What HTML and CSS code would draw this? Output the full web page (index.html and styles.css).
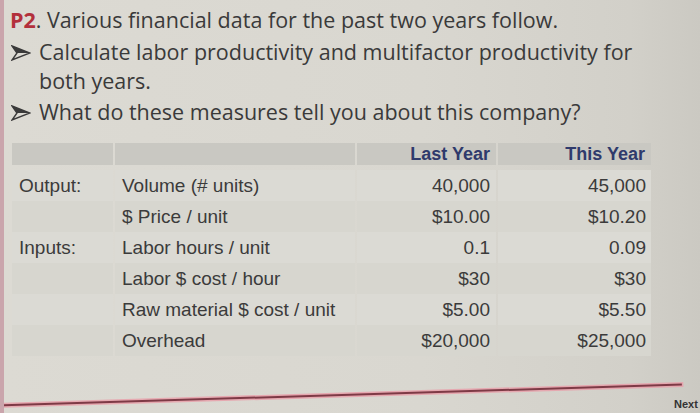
FILE: index.html
```html
<!DOCTYPE html>
<html>
<head>
<meta charset="utf-8">
<link rel="stylesheet" href="styles.css">
</head>
<body>
<div class="page">
  <div class="slide">
    <p class="title"><span class="num">P2</span>. Various financial data for the past two years follow.</p>
    <ul class="bullets">
      <li>
        <svg class="arrow" viewBox="0 0 20 16" width="20" height="16"><polygon points="1,1 19,8 1,15 6,8" fill="none" stroke="#3a3a3a" stroke-width="1.4" stroke-linejoin="miter"/><polygon points="1,1 19,8 6,8" fill="#3a3a3a"/></svg>
        <span>Calculate labor productivity and multifactor productivity for both years.</span>
      </li>
      <li class="second">
        <svg class="arrow" viewBox="0 0 20 16" width="20" height="16"><polygon points="1,1 19,8 1,15 6,8" fill="none" stroke="#3a3a3a" stroke-width="1.4" stroke-linejoin="miter"/><polygon points="1,1 19,8 6,8" fill="#3a3a3a"/></svg>
        <span>What do these measures tell you about this company?</span>
      </li>
    </ul>

    <div class="table">
      <div class="head c1"></div>
      <div class="head c2"></div>
      <div class="head c3">Last Year</div>
      <div class="head c4">This Year</div>

      <div class="cell c1">Output:</div>
      <div class="cell c2">Volume (# units)</div>
      <div class="cell c3">40,000</div>
      <div class="cell c4">45,000</div>

      <div class="cell c1 alt"></div>
      <div class="cell c2 alt">$ Price / unit</div>
      <div class="cell c3 alt">$10.00</div>
      <div class="cell c4 alt">$10.20</div>

      <div class="cell c1">Inputs:</div>
      <div class="cell c2">Labor hours / unit</div>
      <div class="cell c3">0.1</div>
      <div class="cell c4">0.09</div>

      <div class="cell c1 alt"></div>
      <div class="cell c2 alt">Labor $ cost / hour</div>
      <div class="cell c3 alt">$30</div>
      <div class="cell c4 alt">$30</div>

      <div class="cell c1"></div>
      <div class="cell c2">Raw material $ cost / unit</div>
      <div class="cell c3">$5.00</div>
      <div class="cell c4">$5.50</div>

      <div class="cell c1 alt"></div>
      <div class="cell c2 alt">Overhead</div>
      <div class="cell c3 alt">$20,000</div>
      <div class="cell c4 alt">$25,000</div>
    </div>
  </div>

  <div class="footer">
    <div class="rule"></div>
    <div class="next">Next</div>
  </div>
</div>
</body>
</html>
```

FILE: styles.css
```css
html, body {
  margin: 0;
  padding: 0;
  width: 700px;
  height: 413px;
  overflow: hidden;
}

.page {
  width: 700px;
  height: 413px;
  box-sizing: border-box;
  border-left: 4px solid #caa5ac;
  background: linear-gradient(90deg, #dcdad3 0%, #d9d7d0 60%, #d2d0c9 90%, #cbc9c2 100%);
  display: flex;
  flex-direction: column;
  overflow: hidden;
}

.slide {
  padding: 5px 0 0 6px;
  font-family: "Open Sans", "Noto Sans", sans-serif;
  color: #3a3a3a;
}

.title {
  margin: 0 0 3px 0;
  font-size: 21.5px;
  line-height: 29px;
  white-space: nowrap;
}

.num {
  color: #b3303c;
  font-weight: 700;
}

.bullets {
  list-style: none;
  margin: 0;
  padding: 0;
  font-size: 21.5px;
  line-height: 29px;
}

.bullets li {
  display: flex;
  align-items: flex-start;
  width: 650px;
}

.bullets li.second {
  margin-top: 2px;
}

.arrow {
  flex: none;
  margin: 8px 8px 0 1px;
}

.table {
  margin: 17px 0 0 2px;
  display: grid;
  grid-template-columns: 101px 240px 139px 153px;
  grid-template-rows: 27px repeat(6, 31px);
  column-gap: 2px;
  font-family: "Liberation Sans", Arial, sans-serif;
  font-size: 19px;
  color: #3b3b3b;
}

.head {
  align-self: start;
  height: 22px;
  background: #c9c8c2;
  color: #2f3a6c;
  font-weight: 700;
  font-size: 18px;
  display: flex;
  align-items: center;
  justify-content: flex-end;
  padding-right: 6px;
}

.cell {
  display: flex;
  align-items: center;
  background: #dbdad4;
  padding: 0 0 0 7px;
}

.cell.alt {
  background: #d7d6cf;
}

.cell.c3, .cell.c4 {
  justify-content: flex-end;
  padding: 0 6px 0 0;
}

.cell.c4 {
  padding-right: 5px;
}

.footer {
  margin-top: auto;
  padding-bottom: 2px;
}

.rule {
  width: 682px;
  height: 2px;
  margin-left: -4px;
  background: #7e3a46;
  box-shadow: 0 0 0 1.5px rgba(232, 160, 170, 0.85);
  transform: rotate(-1.75deg);
  transform-origin: center;
  margin-bottom: 2px;
}

.next {
  margin-left: 670px;
  white-space: nowrap;
  font-family: "Liberation Sans", Arial, sans-serif;
  font-size: 11px;
  font-weight: 700;
  color: #333;
  line-height: 13px;
}
```
